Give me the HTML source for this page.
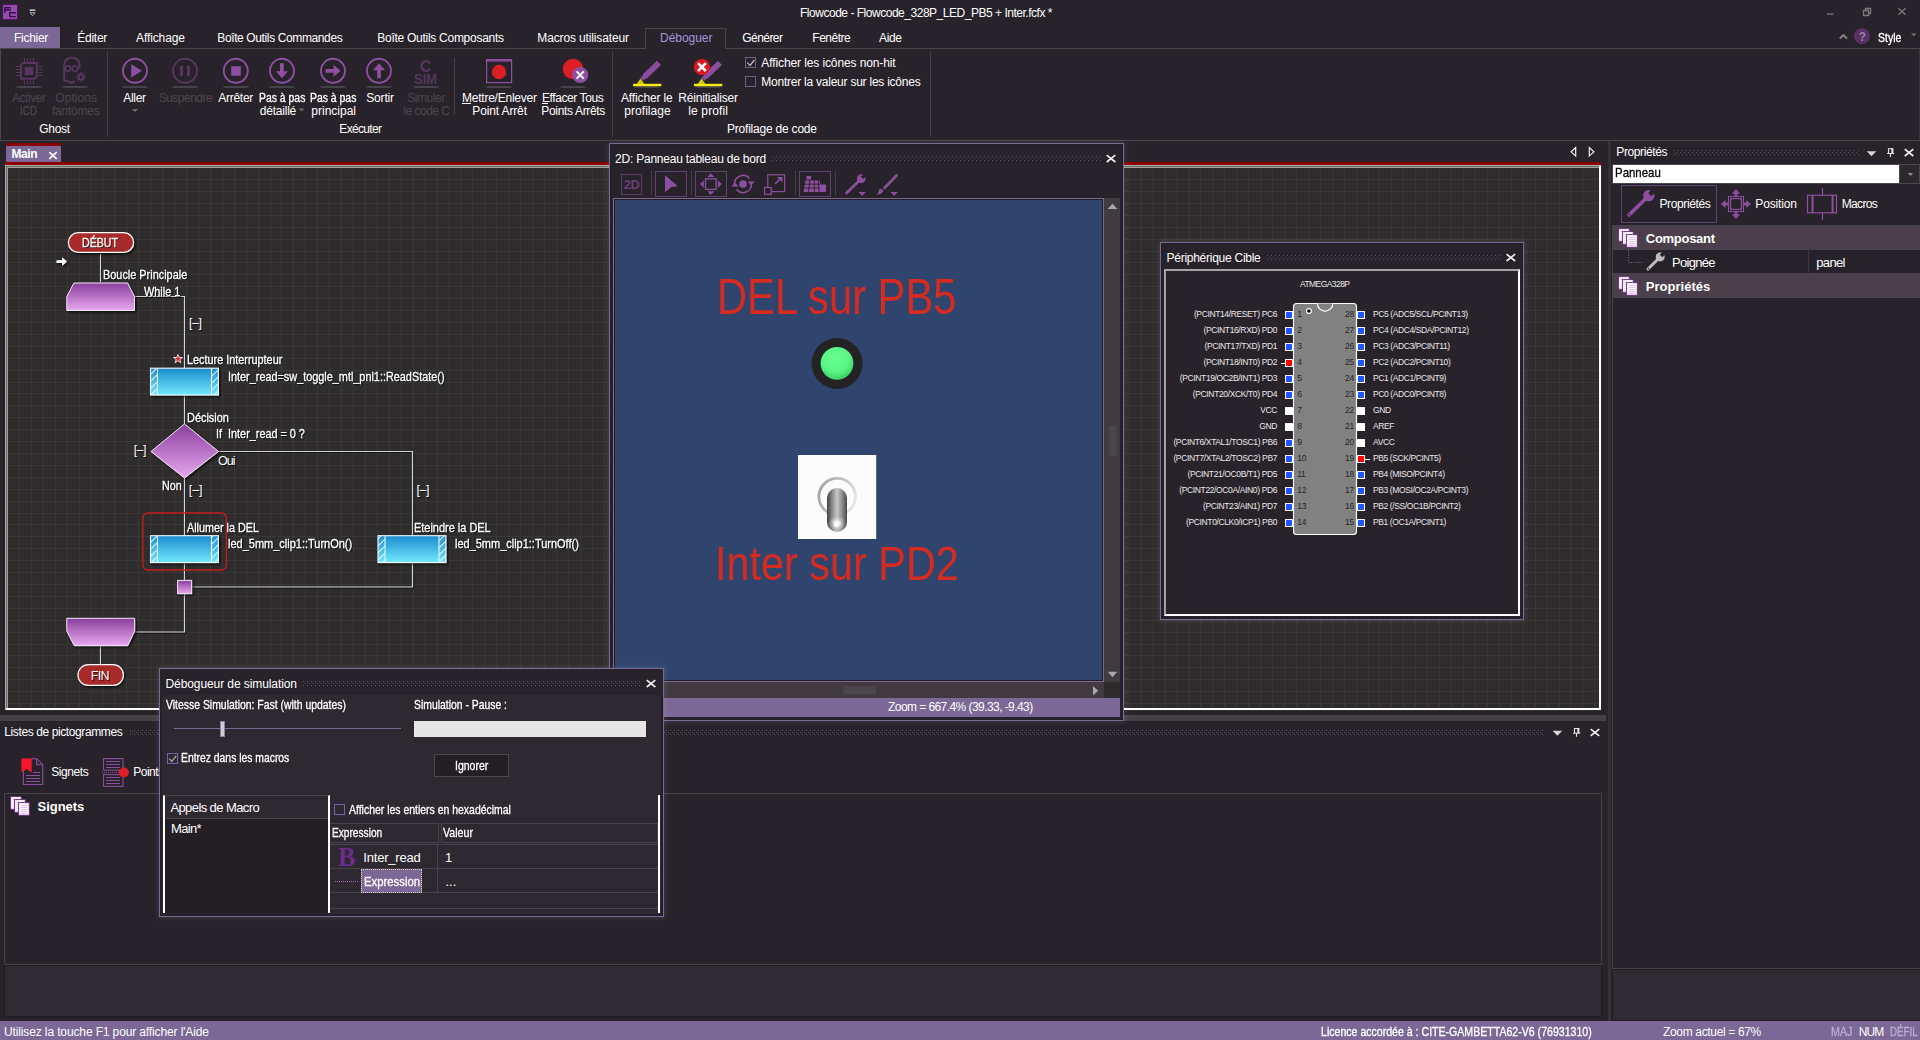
<!DOCTYPE html>
<html><head><meta charset="utf-8"><title>Flowcode</title>
<style>
*{box-sizing:border-box;margin:0;padding:0}
html,body{width:1920px;height:1040px;overflow:hidden;background:#28232a}
body{font-family:"Liberation Sans",sans-serif;font-size:12px;color:#fff;position:relative}
.a{position:absolute}
.t{position:absolute;white-space:nowrap;color:#fff}
svg{position:absolute;overflow:visible}
</style></head><body>
<svg width="0" height="0" style="left:0;top:0"><defs><pattern id="dp" width="4" height="4" patternUnits="userSpaceOnUse"><rect width="1" height="1" fill="#58545c"/><rect x="2" y="2" width="1" height="1" fill="#58545c"/></pattern></defs></svg>

<!-- p_top -->
<svg style="left:0;top:0" width="40" height="27"><rect x="2.500" y="4.500" width="15" height="15" fill="#8e4f9e" stroke="#4a1070"/><path d="M4 7h7v1.400h-5.600v0.900h5.600v1.400h-5.600v2.300h-1.400z" fill="#3c0a5a"/><path d="M9 12h7v1.400h-5.600v2.500h5.600v1.400h-7z" fill="#3c0a5a"/><rect x="29.700" y="9.400" width="5.600" height="1.600" fill="#c4c0c6"/><path d="M30 12.700h5l-2.500 3z" fill="#28232a" stroke="#c4c0c6" stroke-width="0.900"/></svg><span class="t" style="left:800.00px;top:6px;font-size:12px;line-height:14px;letter-spacing:-0.478px;">Flowcode - Flowcode_328P_LED_PB5 + Inter.fcfx *</span><svg style="left:1820px;top:0" width="100" height="27" fill="none" stroke="#7d7980" stroke-width="1.3"><path d="M7 14h6.5"/><path d="M43.5 10.5h5v5h-5zM45.5 10.5v-2h5v5h-2"/><path d="M78.300 8.300l7.300 6.500M85.600 8.300l-7.300 6.500"/></svg><svg style="left:1836px;top:27px" width="84" height="21"><path d="M3.700 11.600l3.700-3.600 3.700 3.600" fill="none" stroke="#8a868c" stroke-width="1.900"/><circle cx="26" cy="9.200" r="8" fill="#583266"/><path d="M75 6.500h5.500l-2.750 2.800z" fill="#77737a"/></svg><span class="t" style="left:1858.50px;top:29px;font-size:13px;line-height:15px;color:#9b8ca6;font-weight:bold;transform:scaleX(0.8802);transform-origin:0 0;">?</span><span class="t" style="left:1878.30px;top:31px;font-size:12px;line-height:14px;transform:scaleX(0.8768);transform-origin:0 0;-webkit-text-stroke:0.300px;">Style</span><div class="a" style="left:0px;top:27px;width:60px;height:21px;background:#7b6896"></div><span class="t" style="left:14.00px;top:31px;font-size:12px;line-height:14px;letter-spacing:-0.286px;">Fichier</span><span class="t" style="left:77.30px;top:31px;font-size:12px;line-height:14px;letter-spacing:-0.272px;">Éditer</span><span class="t" style="left:136.00px;top:31px;font-size:12px;line-height:14px;letter-spacing:-0.104px;">Affichage</span><span class="t" style="left:217.30px;top:31px;font-size:12px;line-height:14px;letter-spacing:-0.381px;">Boîte Outils Commandes</span><span class="t" style="left:377.30px;top:31px;font-size:12px;line-height:14px;letter-spacing:-0.274px;">Boîte Outils Composants</span><span class="t" style="left:537.30px;top:31px;font-size:12px;line-height:14px;letter-spacing:-0.137px;">Macros utilisateur</span><span class="t" style="left:742.30px;top:31px;font-size:12px;line-height:14px;letter-spacing:-0.555px;">Générer</span><span class="t" style="left:812.30px;top:31px;font-size:12px;line-height:14px;letter-spacing:-0.493px;">Fenêtre</span><span class="t" style="left:879.00px;top:31px;font-size:12px;line-height:14px;letter-spacing:-0.344px;">Aide</span><div class="a" style="left:0px;top:48px;width:1920px;height:93px;border-top:1px solid #484648;border-bottom:1px solid #484648;border-left:1px solid #4a464c;border-right:1px solid #3a363c"></div><div class="a" style="left:645px;top:28px;width:81px;height:21px;border:1px solid #484648;border-bottom:none;background:#28232a"></div><span class="t" style="left:660.00px;top:31px;font-size:12px;line-height:14px;color:#a493dc;letter-spacing:-0.031px;">Déboguer</span><div class="a" style="left:107px;top:51px;width:1px;height:86px;background:#433f45"></div><div class="a" style="left:454px;top:58px;width:1px;height:57px;background:#433f45"></div><div class="a" style="left:612px;top:51px;width:1px;height:86px;background:#433f45"></div><div class="a" style="left:930px;top:51px;width:1px;height:86px;background:#433f45"></div><div class="a" style="left:16px;top:86px;width:26px;height:2px;background:linear-gradient(90deg,#343036,#47434a 14%,#47434a 86%,#343036)"></div><div class="a" style="left:62px;top:86px;width:26px;height:2px;background:linear-gradient(90deg,#343036,#47434a 14%,#47434a 86%,#343036)"></div><div class="a" style="left:122px;top:86px;width:26px;height:2px;background:linear-gradient(90deg,#343036,#47434a 14%,#47434a 86%,#343036)"></div><div class="a" style="left:172px;top:86px;width:26px;height:2px;background:linear-gradient(90deg,#343036,#47434a 14%,#47434a 86%,#343036)"></div><div class="a" style="left:223px;top:86px;width:26px;height:2px;background:linear-gradient(90deg,#343036,#47434a 14%,#47434a 86%,#343036)"></div><div class="a" style="left:269px;top:86px;width:26px;height:2px;background:linear-gradient(90deg,#343036,#47434a 14%,#47434a 86%,#343036)"></div><div class="a" style="left:320px;top:86px;width:26px;height:2px;background:linear-gradient(90deg,#343036,#47434a 14%,#47434a 86%,#343036)"></div><div class="a" style="left:366px;top:86px;width:26px;height:2px;background:linear-gradient(90deg,#343036,#47434a 14%,#47434a 86%,#343036)"></div><div class="a" style="left:413px;top:86px;width:26px;height:2px;background:linear-gradient(90deg,#343036,#47434a 14%,#47434a 86%,#343036)"></div><div class="a" style="left:486px;top:86px;width:26px;height:2px;background:linear-gradient(90deg,#343036,#47434a 14%,#47434a 86%,#343036)"></div><div class="a" style="left:560px;top:86px;width:26px;height:2px;background:linear-gradient(90deg,#343036,#47434a 14%,#47434a 86%,#343036)"></div><div class="a" style="left:634px;top:86px;width:26px;height:2px;background:linear-gradient(90deg,#343036,#47434a 14%,#47434a 86%,#343036)"></div><div class="a" style="left:695px;top:86px;width:26px;height:2px;background:linear-gradient(90deg,#343036,#47434a 14%,#47434a 86%,#343036)"></div><svg style="left:0;top:0" width="1" height="1" fill="none" stroke="#573660"><path d="M23 63.100h13.900v13.500l-2.300 2.200h-13.500v-13.700z" stroke-width="2"/><rect x="24.900" y="67.100" width="8.300" height="7.900" fill="#573660" stroke="none"/><path d="M24.5 57.900v4.200M24.5 80.500v4M15.900 66.5h4.200M38.600 66.5h3.600" stroke-width="1.200"/><path d="M27.5 57.900v4.200M27.5 80.500v4M15.900 69.5h4.200M38.600 69.5h3.600" stroke-width="1.200"/><path d="M30.5 57.900v4.200M30.5 80.500v4M15.900 72.5h4.200M38.600 72.5h3.600" stroke-width="1.200"/><path d="M33.5 57.900v4.200M33.5 80.500v4M15.900 75.5h4.200M38.600 75.5h3.600" stroke-width="1.200"/></svg><svg style="left:0;top:0" width="1" height="1" fill="none" stroke="#573660" stroke-width="1.900"><path d="M64.200 81.200V65.200a7.700 7.700 0 0 1 15.400 0v3.200M64.200 81.200q2.600 -1.800 5 0.700q2.600 2.300 5.600 -1"/><circle cx="67.900" cy="68.500" r="2.700" stroke-width="1.600"/><circle cx="75" cy="68.500" r="2.700" stroke-width="1.600"/><circle cx="81" cy="77" r="2.300" stroke-width="1.700"/><path d="M81 72v2.500M81 79.500v2.500M76 77h2.500M83.500 77h2.500M77.500 73.500l1.800 1.800M82.700 78.700l1.800 1.800M84.500 73.500l-1.800 1.800M79.300 78.700l-1.800 1.800" stroke-width="1.500"/></svg><svg style="left:0;top:0" width="1" height="1"><circle cx="135" cy="70.8" r="12" fill="none" stroke="#8d4f9f" stroke-width="1.9"/><path d="M131.2 64.2v13.3L142 70.8z" fill="#8d4f9f"/></svg><svg style="left:0;top:0" width="1" height="1"><circle cx="185" cy="70.8" r="12" fill="none" stroke="#573660" stroke-width="1.9"/><path d="M180 65.8h3v10h-3zM187 65.8h3v10h-3z" fill="#573660"/></svg><svg style="left:0;top:0" width="1" height="1"><circle cx="235.8" cy="70.8" r="12" fill="none" stroke="#8d4f9f" stroke-width="1.9"/><rect x="231.2" y="66.2" width="9.6" height="9.6" fill="#8d4f9f"/></svg><svg style="left:0;top:0" width="1" height="1"><circle cx="282" cy="70.8" r="12" fill="none" stroke="#8d4f9f" stroke-width="1.9"/><path d="M280 63.3h3.8v8h4.2L282 78.3l-6.200 -7h4.200z" fill="#8d4f9f"/></svg><svg style="left:0;top:0" width="1" height="1"><circle cx="333" cy="70.8" r="12" fill="none" stroke="#8d4f9f" stroke-width="1.9"/><path d="M325.5 68.900h8v-4.200l7 6.100l-7 6.100v-4.200h-8z" fill="#8d4f9f"/></svg><svg style="left:0;top:0" width="1" height="1"><circle cx="379" cy="70.8" r="12" fill="none" stroke="#8d4f9f" stroke-width="1.9"/><path d="M377.1 78.300v-8h-4.200L379 63.3l6.100 7h-4.200v8z" fill="#8d4f9f"/></svg><span class="t" style="left:419.50px;top:58px;font-size:16px;line-height:17px;color:#573660;font-weight:bold;transform:scaleX(0.9686);transform-origin:0 0;">C</span><span class="t" style="left:414.30px;top:70px;font-size:15px;line-height:17px;color:#573660;font-weight:bold;transform:scaleX(0.8623);transform-origin:0 0;">SIM</span><svg style="left:0;top:0" width="1" height="1"><rect x="486.6" y="59.6" width="25" height="23" fill="none" stroke="#8d4f9f" stroke-width="1.2"/><rect x="486.600" y="59.600" width="25" height="1.900" fill="#8d4f9f"/><circle cx="499" cy="72" r="7.2" fill="#dc1f26"/></svg><svg style="left:0;top:0" width="1" height="1"><circle cx="573" cy="69" r="10.2" fill="#dc1f26"/><circle cx="580.200" cy="75" r="8" fill="#8d4f9f"/><path d="M576.6 71.4l7.200 7.200M583.8 71.4l-7.200 7.200" stroke="#fff" stroke-width="2"/></svg><svg style="left:0px;top:0" width="1" height="1"><path d="M633 85h28.300" stroke="#f4ee14" stroke-width="2.400"/><path d="M636.600 84l3.900 -5.400 3.900 5.400z" fill="#d2cc08"/><path d="M646.29 78.91L660.99 65.01L657.01 60.79L642.31 74.69zM643.24 80.73L646.44 77.73L643.56 74.67L640.36 77.67z" fill="#8a4c9c"/></svg><svg style="left:61px;top:0" width="1" height="1"><path d="M633 85h28.300" stroke="#f4ee14" stroke-width="2.400"/><path d="M636.600 84l3.900 -5.400 3.900 5.400z" fill="#d2cc08"/><path d="M646.29 78.91L660.99 65.01L657.01 60.79L642.31 74.69zM643.24 80.73L646.44 77.73L643.56 74.67L640.36 77.67z" fill="#8a4c9c"/><circle cx="640.900" cy="67.100" r="8.100" fill="#e0141e"/><path d="M637 63.200l7.800 7.800M644.800 63.200l-7.800 7.800" stroke="#fff" stroke-width="2.500"/></svg><span class="t" style="left:12.00px;top:91px;font-size:12px;line-height:14px;color:#4b464d;letter-spacing:-0.448px;">Activer</span><span class="t" style="left:20.00px;top:104px;font-size:12px;line-height:14px;color:#4b464d;transform:scaleX(0.8369);transform-origin:0 0;-webkit-text-stroke:0.300px;">ICD</span><span class="t" style="left:55.30px;top:91px;font-size:12px;line-height:14px;color:#4b464d;letter-spacing:0.057px;">Options</span><span class="t" style="left:52.00px;top:104px;font-size:12px;line-height:14px;color:#4b464d;letter-spacing:-0.237px;">fantômes</span><span class="t" style="left:123.30px;top:91px;font-size:12px;line-height:14px;letter-spacing:-0.329px;">Aller</span><span class="t" style="left:158.70px;top:91px;font-size:12px;line-height:14px;color:#4b464d;letter-spacing:-0.506px;">Suspendre</span><span class="t" style="left:218.30px;top:91px;font-size:12px;line-height:14px;letter-spacing:-0.281px;">Arrêter</span><span class="t" style="left:259.30px;top:91px;font-size:12px;line-height:14px;transform:scaleX(0.8693);transform-origin:0 0;-webkit-text-stroke:0.300px;">Pas à pas</span><span class="t" style="left:259.70px;top:104px;font-size:12px;line-height:14px;letter-spacing:-0.204px;">détaillé</span><span class="t" style="left:310.30px;top:91px;font-size:12px;line-height:14px;transform:scaleX(0.8693);transform-origin:0 0;-webkit-text-stroke:0.300px;">Pas à pas</span><span class="t" style="left:311.30px;top:104px;font-size:12px;line-height:14px;">principal</span><span class="t" style="left:366.30px;top:91px;font-size:12px;line-height:14px;letter-spacing:-0.194px;">Sortir</span><span class="t" style="left:407.30px;top:91px;font-size:12px;line-height:14px;color:#4b464d;letter-spacing:-0.448px;">Simuler</span><span class="t" style="left:403.30px;top:104px;font-size:12px;line-height:14px;color:#4b464d;letter-spacing:-0.500px;">le code C</span><span class="t" style="left:462.00px;top:91px;font-size:12px;line-height:14px;letter-spacing:-0.233px;">Mettre/Enlever</span><span class="t" style="left:472.30px;top:104px;font-size:12px;line-height:14px;letter-spacing:-0.133px;">Point Arrêt</span><span class="t" style="left:542.00px;top:91px;font-size:12px;line-height:14px;letter-spacing:-0.415px;">Effacer Tous</span><span class="t" style="left:541.30px;top:104px;font-size:12px;line-height:14px;letter-spacing:-0.336px;">Points Arrêts</span><span class="t" style="left:621.00px;top:91px;font-size:12px;line-height:14px;letter-spacing:-0.144px;">Afficher le</span><span class="t" style="left:624.30px;top:104px;font-size:12px;line-height:14px;letter-spacing:0.046px;">profilage</span><span class="t" style="left:678.30px;top:91px;font-size:12px;line-height:14px;letter-spacing:-0.194px;">Réinitialiser</span><span class="t" style="left:688.30px;top:104px;font-size:12px;line-height:14px;letter-spacing:0.127px;">le profil</span><span class="t" style="left:39.30px;top:122px;font-size:12px;line-height:14px;letter-spacing:-0.329px;">Ghost</span><span class="t" style="left:339.30px;top:122px;font-size:12px;line-height:14px;letter-spacing:-0.666px;">Exécuter</span><span class="t" style="left:727.00px;top:122px;font-size:12px;line-height:14px;letter-spacing:-0.213px;">Profilage de code</span><span class="t" style="left:761.30px;top:56px;font-size:12px;line-height:14px;letter-spacing:-0.107px;">Afficher les icônes non-hit</span><span class="t" style="left:761.30px;top:75px;font-size:12px;line-height:14px;letter-spacing:-0.237px;">Montrer la valeur sur les icônes</span><div class="a" style="left:462px;top:103px;width:9px;height:1px;background:#fff"></div><div class="a" style="left:542px;top:103px;width:6px;height:1px;background:#fff"></div><svg style="left:0;top:0" width="1" height="1" fill="#6e6a70"><path d="M132 109h6l-3 3z"/><path d="M298.500 108.500h6l-3 3z"/></svg><div class="a" style="left:745px;top:57px;width:11px;height:11px;border:1px solid #6f5f8c"></div><div class="a" style="left:745px;top:76px;width:11px;height:11px;border:1px solid #6f5f8c"></div><svg style="left:0;top:0" width="1" height="1"><path d="M747.300 62.600l2.700 2.800 4.400 -5.400" fill="none" stroke="#b8b4ba" stroke-width="1.3"/></svg>
<!-- p_canvas -->
<div class="a" style="left:6px;top:143px;width:55px;height:20px;background:#7b6896;border-top:3px solid #8b0000"></div><span class="t" style="left:11.40px;top:147px;font-size:12px;line-height:14px;font-weight:bold;letter-spacing:-0.348px;">Main</span><svg style="left:0;top:0" width="1" height="1"><path d="M49.300 152.200l7.400 6.600M56.700 152.200l-7.400 6.600" stroke="#fff" stroke-width="1.700"/></svg><div class="a" style="left:5px;top:162px;width:1596px;height:3px;background:#8b0000"></div><svg style="left:0;top:0" width="1" height="1" fill="none" stroke="#fff" stroke-width="1.1"><path d="M1575.700 147.500v8.600l-4.600 -4.300z"/><path d="M1589.300 147.500v8.600l4.600 -4.300z"/></svg><svg style="left:5px;top:165px" width="1597" height="546" viewBox="5 165 1597 546" shape-rendering="crispEdges"><rect x="5" y="165" width="1597" height="546" fill="#2e2c2d"/><path d="M19.5 168V708M31.5 168V708M43.5 168V708M55.5 168V708M67.5 168V708M79.5 168V708M91.5 168V708M102.5 168V708M114.5 168V708M126.5 168V708M138.5 168V708M150.5 168V708M162.5 168V708M174.5 168V708M186.5 168V708M198.5 168V708M210.5 168V708M222.5 168V708M234.5 168V708M246.5 168V708M258.5 168V708M270.5 168V708M281.5 168V708M293.5 168V708M305.5 168V708M317.5 168V708M329.5 168V708M341.5 168V708M353.5 168V708M365.5 168V708M377.5 168V708M389.5 168V708M401.5 168V708M413.5 168V708M425.5 168V708M437.5 168V708M449.5 168V708M460.5 168V708M472.5 168V708M484.5 168V708M496.5 168V708M508.5 168V708M520.5 168V708M532.5 168V708M544.5 168V708M556.5 168V708M568.5 168V708M580.5 168V708M592.5 168V708M604.5 168V708M616.5 168V708M628.5 168V708M640.5 168V708M651.5 168V708M663.5 168V708M675.5 168V708M687.5 168V708M699.5 168V708M711.5 168V708M723.5 168V708M735.5 168V708M747.5 168V708M759.5 168V708M771.5 168V708M783.5 168V708M795.5 168V708M807.5 168V708M819.5 168V708M830.5 168V708M842.5 168V708M854.5 168V708M866.5 168V708M878.5 168V708M890.5 168V708M902.5 168V708M914.5 168V708M926.5 168V708M938.5 168V708M950.5 168V708M962.5 168V708M974.5 168V708M986.5 168V708M998.5 168V708M1010.5 168V708M1021.5 168V708M1033.5 168V708M1045.5 168V708M1057.5 168V708M1069.5 168V708M1081.5 168V708M1093.5 168V708M1105.5 168V708M1117.5 168V708M1129.5 168V708M1141.5 168V708M1153.5 168V708M1165.5 168V708M1177.5 168V708M1189.5 168V708M1200.5 168V708M1212.5 168V708M1224.5 168V708M1236.5 168V708M1248.5 168V708M1260.5 168V708M1272.5 168V708M1284.5 168V708M1296.5 168V708M1308.5 168V708M1320.5 168V708M1332.5 168V708M1344.5 168V708M1356.5 168V708M1368.5 168V708M1379.5 168V708M1391.5 168V708M1403.5 168V708M1415.5 168V708M1427.5 168V708M1439.5 168V708M1451.5 168V708M1463.5 168V708M1475.5 168V708M1487.5 168V708M1499.5 168V708M1511.5 168V708M1523.5 168V708M1535.5 168V708M1547.5 168V708M1559.5 168V708M1570.5 168V708M1582.5 168V708M1594.5 168V708M8 179.5H1599M8 191.5H1599M8 203.5H1599M8 215.5H1599M8 227.5H1599M8 239.5H1599M8 251.5H1599M8 262.5H1599M8 274.5H1599M8 286.5H1599M8 298.5H1599M8 310.5H1599M8 322.5H1599M8 334.5H1599M8 346.5H1599M8 358.5H1599M8 370.5H1599M8 382.5H1599M8 393.5H1599M8 405.5H1599M8 417.5H1599M8 429.5H1599M8 441.5H1599M8 453.5H1599M8 465.5H1599M8 477.5H1599M8 489.5H1599M8 501.5H1599M8 513.5H1599M8 524.5H1599M8 536.5H1599M8 548.5H1599M8 560.5H1599M8 572.5H1599M8 584.5H1599M8 596.5H1599M8 608.5H1599M8 620.5H1599M8 632.5H1599M8 644.5H1599M8 655.5H1599M8 667.5H1599M8 679.5H1599M8 691.5H1599M8 703.5H1599" stroke="#3a3735" stroke-width="1"/><rect x="5" y="165" width="1596" height="1" fill="#a8aaa8"/><rect x="5" y="166" width="1596" height="1" fill="#6c6c6a"/><rect x="7" y="167" width="1593" height="1" fill="#a39f94"/><rect x="5" y="165" width="1" height="545" fill="#a8aaa8"/><rect x="6" y="166" width="1" height="543" fill="#6c6c6a"/><rect x="7" y="167" width="1" height="541" fill="#a39f94"/><rect x="1599" y="166" width="2.300" height="544" fill="#fff"/><rect x="6" y="708" width="1595.300" height="2.300" fill="#fff"/></svg><div class="a" style="left:0px;top:715px;width:1606px;height:6px;background:#444244"></div><div class="a" style="left:1608px;top:141px;width:3px;height:880px;background:#343136"></div><svg style="left:0;top:0" width="1" height="1"><defs><linearGradient id="gp" x1="0" y1="0" x2="0" y2="1"><stop offset="0" stop-color="#8a3f9c"/><stop offset="1" stop-color="#e8a8f0"/></linearGradient><linearGradient id="gb" x1="0" y1="0" x2="0" y2="1"><stop offset="0" stop-color="#1c8cd0"/><stop offset="1" stop-color="#72e8fd"/></linearGradient><pattern id="hz" width="7" height="7" patternUnits="userSpaceOnUse"><path d="M-1 8L8 -1M-1 1L1 -1M6 8L8 6" stroke="#f4fcff" stroke-width="1.100" stroke-opacity="0.900"/></pattern><filter id="sh" x="-20%" y="-20%" width="150%" height="150%"><feDropShadow dx="1.500" dy="1.500" stdDeviation="0.800" flood-color="#000" flood-opacity="0.700"/></filter></defs><path d="M100.500 254V282 M135 296.500H184.500V368 M184.500 395V424 M184.500 478V536 M184.500 563V580 M218.500 451.500H412.500V536 M412.500 563V587H192.500 M184.500 594V632H135 M100.500 646V664" fill="none" stroke="#000" stroke-opacity="0.550" stroke-width="1.2" transform="translate(1.2,1.2)"/><path d="M100.500 254V282 M135 296.500H184.500V368 M184.500 395V424 M184.500 478V536 M184.500 563V580 M218.500 451.500H412.500V536 M412.500 563V587H192.500 M184.500 594V632H135 M100.500 646V664" fill="none" stroke="#d4d4d4" stroke-width="1.2"/><rect x="68.400" y="232.600" width="65.200" height="19.800" rx="9.900" fill="#a82a2a" stroke="#fff" stroke-width="1.200" filter="url(#sh)"/><rect x="78" y="664.600" width="45.400" height="20.800" rx="10.400" fill="#a82a2a" stroke="#fff" stroke-width="1.200" filter="url(#sh)"/><path d="M73.900 283H127.600L134.500 296.600V310.500H66.800V296.600z" fill="url(#gp)" stroke="#f4e4f8" stroke-width="1" filter="url(#sh)"/><path d="M66.800 618.300H134.600V631L127.800 645.600H74.200L66.800 631z" fill="url(#gp)" stroke="#f4e4f8" stroke-width="1" filter="url(#sh)"/><path d="M184.500 424L218.500 451.500L184.500 478L151 451.500z" fill="url(#gp)" stroke="#f4e4f8" stroke-width="1" filter="url(#sh)"/><rect x="177.600" y="580.400" width="14" height="13.200" fill="url(#gp)" stroke="#f4e4f8" stroke-width="1" filter="url(#sh)"/><g filter="url(#sh)"><rect x="150.5" y="368.2" width="67.900" height="26.800" fill="url(#gb)"/><rect x="150.5" y="368.2" width="7" height="26.800" fill="url(#hz)"/><rect x="211.5" y="368.2" width="7.300" height="26.800" fill="url(#hz)"/><path d="M157.5 368.2v26.800M211.5 368.2v26.800" stroke="#f0fbff" stroke-width="1"/><rect x="150.5" y="368.2" width="67.900" height="26.800" fill="none" stroke="#eef8ff" stroke-width="1.100"/></g><g filter="url(#sh)"><rect x="150.5" y="535.7" width="67.900" height="26.800" fill="url(#gb)"/><rect x="150.5" y="535.7" width="7" height="26.800" fill="url(#hz)"/><rect x="211.5" y="535.7" width="7.300" height="26.800" fill="url(#hz)"/><path d="M157.5 535.7v26.800M211.5 535.7v26.800" stroke="#f0fbff" stroke-width="1"/><rect x="150.5" y="535.7" width="67.900" height="26.800" fill="none" stroke="#eef8ff" stroke-width="1.100"/></g><g filter="url(#sh)"><rect x="378" y="535.7" width="67.900" height="26.800" fill="url(#gb)"/><rect x="378" y="535.7" width="7" height="26.800" fill="url(#hz)"/><rect x="439" y="535.7" width="7.300" height="26.800" fill="url(#hz)"/><path d="M385 535.7v26.800M439 535.7v26.800" stroke="#f0fbff" stroke-width="1"/><rect x="378" y="535.7" width="67.900" height="26.800" fill="none" stroke="#eef8ff" stroke-width="1.100"/></g><rect x="142.900" y="513" width="83.500" height="57" rx="5" fill="none" stroke="#c81c1c" stroke-width="1.400"/><path d="M56.500 260.300h5.500v-3l5 4.300l-5 4.300v-3h-5.500z" fill="#fff" filter="url(#sh)"/><path d="M178 354.500l1.200 3h3.200l-2.600 2 1 3.200-2.800-1.900-2.800 1.900 1-3.200-2.600-2h3.200z" fill="#e8202a" stroke="#fff" stroke-width="0.800"/></svg><span class="t" style="left:82.40px;top:236px;font-size:12.5px;line-height:14px;transform:scaleX(0.8496);transform-origin:0 0;-webkit-text-stroke:0.300px;text-shadow:1px 1px 1px rgba(0,0,0,.8);white-space:pre;">DÉBUT</span><span class="t" style="left:90.80px;top:669px;font-size:12.5px;line-height:14px;letter-spacing:-0.670px;text-shadow:1px 1px 1px rgba(0,0,0,.8);white-space:pre;">FIN</span><span class="t" style="left:102.80px;top:268px;font-size:12.5px;line-height:14px;transform:scaleX(0.8717);transform-origin:0 0;-webkit-text-stroke:0.300px;text-shadow:1px 1px 1px rgba(0,0,0,.8);white-space:pre;">Boucle Principale</span><span class="t" style="left:143.60px;top:285px;font-size:12.5px;line-height:14px;transform:scaleX(0.8732);transform-origin:0 0;-webkit-text-stroke:0.300px;text-shadow:1px 1px 1px rgba(0,0,0,.8);white-space:pre;">While 1</span><span class="t" style="left:186.60px;top:353px;font-size:12.5px;line-height:14px;transform:scaleX(0.8680);transform-origin:0 0;-webkit-text-stroke:0.300px;text-shadow:1px 1px 1px rgba(0,0,0,.8);white-space:pre;">Lecture Interrupteur</span><span class="t" style="left:228.30px;top:370px;font-size:12.5px;line-height:14px;transform:scaleX(0.8691);transform-origin:0 0;-webkit-text-stroke:0.300px;text-shadow:1px 1px 1px rgba(0,0,0,.8);white-space:pre;">Inter_read=sw_toggle_mtl_pnl1::ReadState()</span><span class="t" style="left:187.00px;top:411px;font-size:12.5px;line-height:14px;transform:scaleX(0.8741);transform-origin:0 0;-webkit-text-stroke:0.300px;text-shadow:1px 1px 1px rgba(0,0,0,.8);white-space:pre;">Décision</span><span class="t" style="left:216.30px;top:427px;font-size:12.5px;line-height:14px;transform:scaleX(0.8673);transform-origin:0 0;-webkit-text-stroke:0.300px;text-shadow:1px 1px 1px rgba(0,0,0,.8);white-space:pre;">If  Inter_read = 0 ?</span><span class="t" style="left:218.00px;top:454px;font-size:12.5px;line-height:14px;letter-spacing:-0.927px;text-shadow:1px 1px 1px rgba(0,0,0,.8);white-space:pre;">Oui</span><span class="t" style="left:162.40px;top:479px;font-size:12.5px;line-height:14px;transform:scaleX(0.8545);transform-origin:0 0;-webkit-text-stroke:0.300px;text-shadow:1px 1px 1px rgba(0,0,0,.8);white-space:pre;">Non</span><span class="t" style="left:187.00px;top:521px;font-size:12.5px;line-height:14px;transform:scaleX(0.8624);transform-origin:0 0;-webkit-text-stroke:0.300px;text-shadow:1px 1px 1px rgba(0,0,0,.8);white-space:pre;">Allumer la DEL</span><span class="t" style="left:227.80px;top:537px;font-size:12.5px;line-height:14px;transform:scaleX(0.8792);transform-origin:0 0;-webkit-text-stroke:0.300px;text-shadow:1px 1px 1px rgba(0,0,0,.8);white-space:pre;">led_5mm_clip1::TurnOn()</span><span class="t" style="left:414.30px;top:521px;font-size:12.5px;line-height:14px;transform:scaleX(0.8759);transform-origin:0 0;-webkit-text-stroke:0.300px;text-shadow:1px 1px 1px rgba(0,0,0,.8);white-space:pre;">Eteindre la DEL</span><span class="t" style="left:455.00px;top:537px;font-size:12.5px;line-height:14px;transform:scaleX(0.8778);transform-origin:0 0;-webkit-text-stroke:0.300px;text-shadow:1px 1px 1px rgba(0,0,0,.8);white-space:pre;">led_5mm_clip1::TurnOff()</span><span class="t" style="left:189.00px;top:316px;font-size:12.5px;line-height:14px;letter-spacing:-0.453px;text-shadow:1px 1px 1px rgba(0,0,0,.8);white-space:pre;">[–]</span><span class="t" style="left:133.70px;top:443px;font-size:12.5px;line-height:14px;letter-spacing:-0.603px;text-shadow:1px 1px 1px rgba(0,0,0,.8);white-space:pre;">[–]</span><span class="t" style="left:188.80px;top:483px;font-size:12.5px;line-height:14px;letter-spacing:-0.103px;text-shadow:1px 1px 1px rgba(0,0,0,.8);white-space:pre;">[–]</span><span class="t" style="left:416.50px;top:483px;font-size:12.5px;line-height:14px;letter-spacing:-0.453px;text-shadow:1px 1px 1px rgba(0,0,0,.8);white-space:pre;">[–]</span>
<!-- p_props -->
<span class="t" style="left:1616.30px;top:145px;font-size:12px;line-height:14px;letter-spacing:-0.389px;">Propriétés</span><svg style="left:1674px;top:150px" width="185" height="5" shape-rendering="crispEdges"><rect width="185" height="5" fill="url(#dp)"/></svg><svg style="left:0;top:0" width="1" height="1"><path d="M1866.700 151.200h9.600l-4.800 5z" fill="#d6d6d6"/><path d="M1888.500 153v-4.300h4.200v4.300M1887 153.500h7.200M1890.500 154v3" fill="none" stroke="#e4e4e4" stroke-width="1.100"/><rect x="1891.300" y="148.200" width="1.900" height="5" fill="#e4e4e4"/><path d="M1905.400 149.700l7.300 5.800M1912.700 149.700l-7.300 5.800" stroke="#f0f0f0" stroke-width="1.650" stroke-linecap="square"/></svg><div class="a" style="left:1612px;top:164px;width:308px;height:20px;background:#2d272e;border:1px solid #4a474c"></div><div class="a" style="left:1613px;top:165px;width:286px;height:18px;background:#fff"></div><div class="a" style="left:1899px;top:165px;width:1px;height:18px;background:#4a474c"></div><span class="t" style="left:1614.50px;top:165px;font-size:13px;line-height:15px;color:#000;transform:scaleX(0.8797);transform-origin:0 0;-webkit-text-stroke:0.300px;">Panneau</span><svg style="left:0;top:0" width="1" height="1"><path d="M1907.700 173h5.400l-2.700 3z" fill="#8e8e8e"/></svg><div class="a" style="left:1621px;top:184.7px;width:96px;height:38px;border:1px solid #5c4372"></div><svg style="left:0;top:0" width="1" height="1"><path d="M1629 215L1645.95 198.45" stroke="#8d4f9f" stroke-width="3.7" stroke-linecap="round"/><circle cx="1648.8" cy="195.6" r="5.7" fill="#8d4f9f"/><path d="M1651.38 196.16 L1648.24 193.02 L1654.28 186.97 L1657.43 190.12 z" fill="#28232a"/><circle cx="1629.5" cy="214.5" r="0.814" fill="#28232a"/><rect x="1728.500" y="196.500" width="15" height="15" fill="none" stroke="#8d4f9f" stroke-width="1.100"/><rect x="1730.600" y="198.600" width="10.800" height="10.800" fill="none" stroke="#8d4f9f" stroke-width="1.200"/><path d="M1736 189l4.100 4.700h-2.700v2.600h-2.800v-2.600h-2.700zM1736 219l4.100-4.700h-2.700v-2.600h-2.800v2.600h-2.700zM1720.800 204l4.700-4.100v2.700h2.600v2.800h-2.600v2.700zM1751 204l-4.700-4.100v2.700h-2.600v2.800h2.600v2.700z" fill="#8d4f9f"/><rect x="1807.500" y="195.300" width="29" height="17.500" fill="none" stroke="#8d4f9f" stroke-width="1.200"/><path d="M1822.500 188v7.300M1822.500 212.800v7.200" stroke="#8d4f9f" stroke-width="1.200"/><path d="M1812.500 195.300v17.500M1832.600 195.300v17.500" stroke="#8d4f9f" stroke-width="2"/></svg><span class="t" style="left:1659.50px;top:197px;font-size:12px;line-height:14px;letter-spacing:-0.389px;">Propriétés</span><span class="t" style="left:1755.30px;top:197px;font-size:12px;line-height:14px;letter-spacing:-0.143px;">Position</span><span class="t" style="left:1841.70px;top:197px;font-size:12px;line-height:14px;letter-spacing:-0.649px;">Macros</span><div class="a" style="left:1612px;top:225px;width:308px;height:744px;border-left:1px solid #454347;border-bottom:1px solid #454347;border-top:1px solid #454347"></div><div class="a" style="left:1613px;top:226px;width:307px;height:24px;background:#4b3f4b"></div><div class="a" style="left:1613px;top:273px;width:307px;height:25px;background:#4b3f4b"></div><div class="a" style="left:1613px;top:250px;width:195px;height:23px;background:#27222a"></div><div class="a" style="left:1809px;top:250px;width:111px;height:23px;background:#27222a"></div><div class="a" style="left:1808px;top:250px;width:1px;height:23px;background:#3d393f"></div><svg style="left:1618px;top:228px" width="21" height="21"><rect x="0.6" y="0.6" width="10.700" height="12.700" fill="#fff" stroke="#6f2d86" stroke-width="1"/><path d="M2.6 3.5h6.800M2.6 5.5h6.800M2.6 7.5h6.800M2.6 9.5h6.800M2.6 11.5h6.800" stroke="#ecbef6" stroke-width="1"/><rect x="4.6" y="3.6" width="10.700" height="12.700" fill="#fff" stroke="#6f2d86" stroke-width="1"/><path d="M6.6 6.5h6.800M6.6 8.5h6.800M6.6 10.5h6.800M6.6 12.5h6.800M6.6 14.5h6.800" stroke="#ecbef6" stroke-width="1"/><rect x="8.6" y="6.6" width="10.700" height="12.700" fill="#fff" stroke="#6f2d86" stroke-width="1"/><path d="M10.6 9.5h6.800M10.6 11.5h6.800M10.6 13.5h6.800M10.6 15.5h6.800M10.6 17.5h6.800" stroke="#ecbef6" stroke-width="1"/></svg><svg style="left:1618px;top:276px" width="21" height="21"><rect x="0.6" y="0.6" width="10.700" height="12.700" fill="#fff" stroke="#6f2d86" stroke-width="1"/><path d="M2.6 3.5h6.800M2.6 5.5h6.800M2.6 7.5h6.800M2.6 9.5h6.800M2.6 11.5h6.800" stroke="#ecbef6" stroke-width="1"/><rect x="4.6" y="3.6" width="10.700" height="12.700" fill="#fff" stroke="#6f2d86" stroke-width="1"/><path d="M6.6 6.5h6.800M6.6 8.5h6.800M6.6 10.5h6.800M6.6 12.5h6.800M6.6 14.5h6.800" stroke="#ecbef6" stroke-width="1"/><rect x="8.6" y="6.6" width="10.700" height="12.700" fill="#fff" stroke="#6f2d86" stroke-width="1"/><path d="M10.6 9.5h6.800M10.6 11.5h6.800M10.6 13.5h6.800M10.6 15.5h6.800M10.6 17.5h6.800" stroke="#ecbef6" stroke-width="1"/></svg><span class="t" style="left:1645.80px;top:231px;font-size:13px;line-height:15px;font-weight:bold;letter-spacing:-0.287px;">Composant</span><span class="t" style="left:1645.80px;top:279px;font-size:13px;line-height:15px;font-weight:bold;letter-spacing:0.021px;">Propriétés</span><span class="t" style="left:1672.00px;top:255px;font-size:13px;line-height:15px;letter-spacing:-0.703px;">Poignée</span><span class="t" style="left:1816.20px;top:255px;font-size:13px;line-height:15px;letter-spacing:-0.628px;">panel</span><svg style="left:0;top:0" width="1" height="1"><path d="M1628.500 250v12.500h14.500" fill="none" stroke="#77737a" stroke-width="1" stroke-dasharray="1 1.500"/><path d="M1648 269L1657.95 259.15" stroke="#bcbcbc" stroke-width="2.9" stroke-linecap="round"/><circle cx="1660.2" cy="256.9" r="4.5" fill="#bcbcbc"/><path d="M1662.24 257.35 L1659.75 254.86 L1664.53 250.09 L1667.01 252.57 z" fill="#27222a"/><circle cx="1648.5" cy="268.5" r="0.638" fill="#27222a"/></svg><div class="a" style="left:1612px;top:969px;width:308px;height:52px;background:#302b32;border:1px solid #1e1a20;border-right:none"></div>
<!-- p_bottom -->
<span class="t" style="left:4.30px;top:725px;font-size:12px;line-height:14px;letter-spacing:-0.397px;">Listes de pictogrammes</span><svg style="left:130px;top:730px" width="1413" height="5" shape-rendering="crispEdges"><rect width="1413" height="5" fill="url(#dp)"/></svg><svg style="left:0;top:0" width="1" height="1"><path d="M1552.600 730.800h9.600l-4.800 5z" fill="#d6d6d6"/><path d="M1574.500 732.800v-4.300h4.200v4.300M1573 733.300h7.200M1576.500 733.800v3" fill="none" stroke="#e4e4e4" stroke-width="1.100"/><rect x="1577.300" y="728" width="1.900" height="5" fill="#e4e4e4"/><path d="M1591.300 729.600l7.300 5.800M1598.600 729.600l-7.300 5.800" stroke="#f0f0f0" stroke-width="1.650" stroke-linecap="square"/></svg><svg style="left:0;top:0" width="1" height="1" fill="none" stroke="#8d4f9f" stroke-width="1.100"><path d="M31 758.700h5.700l6 6v19.800h-19.300V771"/><path d="M36.700 758.700v6h6"/><path d="M33 772.500h7M26 775.500h14M26 778.500h14M26 781.500h14" stroke-width="1"/><path d="M21.400 758.600h10.300v14l-5.150-3.600-5.150 3.600z" fill="#f5182c" stroke="none"/><rect x="103.500" y="758.600" width="19.500" height="11.600"/><rect x="103.500" y="774.600" width="19.500" height="11.800"/><path d="M106 761.500h14M106 764.500h14M106 767.500h14M106 777.500h14M106 780.500h14M106 783.500h14" stroke-width="1"/><path d="M102 772.500h17" stroke-dasharray="1 1"/><circle cx="123.900" cy="772.500" r="5.100" fill="#dc1f26" stroke="none"/></svg><span class="t" style="left:51.30px;top:765px;font-size:12px;line-height:14px;letter-spacing:-0.439px;">Signets</span><span class="t" style="left:133.30px;top:765px;font-size:12px;line-height:14px;letter-spacing:-0.532px;">Points</span><div class="a" style="left:4px;top:793px;width:1598px;height:172px;border:1px solid #454347"></div><div class="a" style="left:4px;top:965px;width:1598px;height:52px;border:1px solid #1e1a20;background:#302b32"></div><svg style="left:10px;top:796px" width="21" height="21"><rect x="0.6" y="0.6" width="10.700" height="12.700" fill="#fff" stroke="#6f2d86" stroke-width="1"/><path d="M2.6 3.5h6.800M2.6 5.5h6.800M2.6 7.5h6.800M2.6 9.5h6.800M2.6 11.5h6.800" stroke="#ecbef6" stroke-width="1"/><rect x="4.6" y="3.6" width="10.700" height="12.700" fill="#fff" stroke="#6f2d86" stroke-width="1"/><path d="M6.6 6.5h6.800M6.6 8.5h6.800M6.6 10.5h6.800M6.6 12.5h6.800M6.6 14.5h6.800" stroke="#ecbef6" stroke-width="1"/><rect x="8.6" y="6.6" width="10.700" height="12.700" fill="#fff" stroke="#6f2d86" stroke-width="1"/><path d="M10.6 9.5h6.800M10.6 11.5h6.800M10.6 13.5h6.800M10.6 15.5h6.800M10.6 17.5h6.800" stroke="#ecbef6" stroke-width="1"/></svg><span class="t" style="left:37.50px;top:799px;font-size:13px;line-height:15px;font-weight:bold;letter-spacing:-0.028px;">Signets</span>
<!-- p_2d -->
<div class="a" style="left:609px;top:143px;width:515px;height:578px;background:#28232a;border:1px solid #7b6896;box-shadow:0 0 5px 1px rgba(255,255,255,.11),inset 0 0 0 2px #242027"></div><span class="t" style="left:615.00px;top:152px;font-size:12px;line-height:14px;letter-spacing:-0.215px;">2D: Panneau tableau de bord</span><svg style="left:772px;top:156px" width="329" height="5" shape-rendering="crispEdges"><rect width="329" height="5" fill="url(#dp)"/></svg><svg style="left:0;top:0" width="1" height="1"><path d="M1107.400 155.700l7.300 5.800M1114.700 155.700l-7.300 5.800" stroke="#f0f0f0" stroke-width="1.650" stroke-linecap="square"/></svg><div class="a" style="left:621px;top:174px;width:21px;height:21px;border:1px solid #5e3868"></div><span class="t" style="left:623.80px;top:177px;font-size:13px;line-height:15px;color:#6a3f78;font-weight:bold;letter-spacing:-0.425px;">2D</span><div class="a" style="left:651px;top:171px;width:1px;height:25px;background:#433f45"></div><div class="a" style="left:691px;top:171px;width:1px;height:25px;background:#433f45"></div><div class="a" style="left:795px;top:171px;width:1px;height:25px;background:#433f45"></div><div class="a" style="left:835px;top:171px;width:1px;height:25px;background:#433f45"></div><div class="a" style="left:655px;top:171px;width:32px;height:26px;border:1px solid #5c4372"></div><div class="a" style="left:695px;top:171px;width:32px;height:26px;border:1px solid #5c4372"></div><div class="a" style="left:799px;top:171px;width:32px;height:26px;border:1px solid #5c4372"></div><svg style="left:0;top:0" width="1" height="1"><path d="M665 175.200L677.700 186L671 187.300L665 192.300z" fill="#8d4f9f"/><rect x="705.500" y="178.800" width="10.600" height="10.600" fill="none" stroke="#8d4f9f" stroke-width="1.300"/><path d="M710.800 173.300l3.600 3.800h-7.200zM710.800 195l3.600 -3.800h-7.200zM700 184.100l3.800 -3.600v7.200zM721.700 184.100l-3.800 -3.600v7.200z" fill="#8d4f9f"/><circle cx="743" cy="184" r="3.800" fill="#8d4f9f"/><path d="M734.500 184a8.500 8.500 0 0 1 15 -5.500" fill="none" stroke="#8d4f9f" stroke-width="1.500"/><path d="M751.500 184a8.500 8.500 0 0 1 -15 5.500" fill="none" stroke="#8d4f9f" stroke-width="1.500"/><path d="M747.500 181.500h7l-3.500 4zM731.500 186.500h7l-3.500 -4z" fill="#8d4f9f"/><rect x="767.800" y="174.800" width="16.800" height="16.800" fill="none" stroke="#8d4f9f" stroke-width="1.200"/><rect x="764.500" y="187.500" width="6.800" height="6.800" fill="#28232a" stroke="#8d4f9f" stroke-width="1.200"/><path d="M775 184l6 -6" stroke="#8d4f9f" stroke-width="1.600"/><path d="M777 177h5.500v5.500z" fill="#8d4f9f"/><path d="M806.500 176h4.500v3.500h-4.500zM805.500 180.500h14l1 4h5.500v7.500h-22.500z" fill="#8d4f9f"/><path d="M804.500 184.200h15.500M804 188h16M809.800 180.500l-1.300 11.500M814.300 180.500v11.500M818.300 180.500l0.800 11.500" stroke="#28232a" stroke-width="0.900"/><path d="M846.5 193L859.15 180.75" stroke="#8d4f9f" stroke-width="2.8" stroke-linecap="round"/><circle cx="861.3" cy="178.6" r="4.3" fill="#8d4f9f"/><path d="M863.25 179.03 L860.87 176.65 L865.44 172.09 L867.81 174.46 z" fill="#28232a"/><path d="M858.500 192h7.400l-3.700 3.800z" fill="#8d4f9f"/><path d="M884.500 188L896.500 175.500" stroke="#8d4f9f" stroke-width="2.600" stroke-linecap="round"/><path d="M877 194.500q4 0.500 6.500 -3.500q-1.500 -3 -4 -2q-1 3 -2.500 5.500z" fill="#8d4f9f"/><path d="M890.500 192h7.400l-3.700 3.800z" fill="#8d4f9f"/></svg><div class="a" style="left:613px;top:198px;width:491px;height:484px;background:#2f456e;border:1px solid #7b6896;box-shadow:inset 0 0 0 1px #221e24"></div><div class="a" style="left:1104px;top:198px;width:16px;height:484px;background:#413a41"></div><div class="a" style="left:1108.5px;top:426px;width:8px;height:30px;background:#4b464d"></div><div class="a" style="left:614px;top:682px;width:490px;height:16px;background:#413a41"></div><div class="a" style="left:843px;top:686px;width:33px;height:8px;background:#4b464d"></div><div class="a" style="left:1104px;top:682px;width:16px;height:16px;background:#2d2b2c"></div><svg style="left:0;top:0" width="1" height="1" fill="#a9a9a9"><path d="M1107.700 209h9.600l-4.800 -5.300z"/><path d="M1107.800 671.800h9.400l-4.700 5.400z"/><path d="M1093 685.900v9.500l5.100 -4.750z"/></svg><div class="a" style="left:614px;top:698px;width:506px;height:19px;background:#7b6896"></div><span class="t" style="left:888.00px;top:700px;font-size:12px;line-height:14px;letter-spacing:-0.564px;">Zoom = 667.4% (39.33, -9.43)</span><span class="t" style="left:716.80px;top:269px;font-size:50px;line-height:56px;color:#d62b20;transform:scaleX(0.8336);transform-origin:0 0;">DEL sur PB5</span><span class="t" style="left:715.00px;top:536px;font-size:49px;line-height:54px;color:#d62b20;transform:scaleX(0.8449);transform-origin:0 0;">Inter sur PD2</span><svg style="left:0;top:0" width="1" height="1"><defs><radialGradient id="lg" cx="0.450" cy="0.350" r="0.700"><stop offset="0" stop-color="#6aff90"/><stop offset="0.600" stop-color="#5af585"/><stop offset="1" stop-color="#35c862"/></radialGradient><linearGradient id="lv" x1="0" y1="0" x2="1" y2="0"><stop offset="0" stop-color="#404040"/><stop offset="0.220" stop-color="#808080"/><stop offset="0.500" stop-color="#c8c8c8"/><stop offset="0.780" stop-color="#868686"/><stop offset="1" stop-color="#484848"/></linearGradient><linearGradient id="rg" x1="0" y1="0.300" x2="1" y2="0.700"><stop offset="0" stop-color="#a4a4a4"/><stop offset="1" stop-color="#e6e6e6"/></linearGradient><radialGradient id="bl" cx="0.500" cy="0.550" r="0.550"><stop offset="0" stop-color="#fff"/><stop offset="0.250" stop-color="#f4f4f4"/><stop offset="1" stop-color="#909090" stop-opacity="0"/></radialGradient></defs><circle cx="837.100" cy="363.500" r="25.500" fill="#232323"/><circle cx="837" cy="363.300" r="16.400" fill="url(#lg)"/><rect x="798" y="455" width="78.200" height="84" fill="#fcfcfc"/><circle cx="837.200" cy="496.600" r="18.300" fill="none" stroke="url(#rg)" stroke-width="2.800"/><rect x="827" y="488" width="20" height="44" rx="10" fill="url(#lv)"/><circle cx="837" cy="522.500" r="8.500" fill="url(#bl)"/><circle cx="836.300" cy="525" r="2" fill="#fff"/></svg>
<!-- p_chip -->
<div class="a" style="left:1160px;top:242px;width:364px;height:378px;background:#28232a;border:1px solid #7b6896;box-shadow:0 0 5px 1px rgba(255,255,255,.11),inset 0 0 0 2px #242027"></div><span class="t" style="left:1166.50px;top:251px;font-size:12px;line-height:14px;letter-spacing:-0.261px;">Périphérique Cible</span><svg style="left:1267px;top:255px" width="233" height="5" shape-rendering="crispEdges"><rect width="233" height="5" fill="url(#dp)"/></svg><svg style="left:0;top:0" width="1" height="1"><path d="M1507.200 254.700l7.300 5.800M1514.500 254.700l-7.300 5.800" stroke="#f0f0f0" stroke-width="1.650" stroke-linecap="square"/></svg><div class="a" style="left:1164px;top:269px;width:356px;height:347px;border:2px solid #fff;border-top-color:#a4a4a4;border-left-color:#a4a4a4;background:#28232a"></div><span class="t" style="left:1300.00px;top:279px;font-size:8.5px;line-height:10px;color:#e8e8e8;letter-spacing:-0.569px;">ATMEGA328P</span><svg style="left:0;top:0" width="1" height="1" shape-rendering="auto"><rect x="1293.500" y="303.500" width="63" height="231" rx="3" fill="#818181" stroke="#fff" stroke-width="1.100"/><path d="M1317.400 303.500a7.700 7.700 0 0 0 15.400 0" fill="#818181" stroke="#fff" stroke-width="1.200"/><circle cx="1308.900" cy="311" r="2.400" fill="#000" stroke="#fff" stroke-width="1.200"/><rect x="1285" y="311" width="8" height="8" fill="#fff"/><rect x="1286" y="312" width="6" height="6" fill="#2454ff"/><rect x="1357" y="311" width="8" height="8" fill="#fff"/><rect x="1358" y="312" width="6" height="6" fill="#2454ff"/><rect x="1285" y="327" width="8" height="8" fill="#fff"/><rect x="1286" y="328" width="6" height="6" fill="#2454ff"/><rect x="1357" y="327" width="8" height="8" fill="#fff"/><rect x="1358" y="328" width="6" height="6" fill="#2454ff"/><rect x="1285" y="343" width="8" height="8" fill="#fff"/><rect x="1286" y="344" width="6" height="6" fill="#2454ff"/><rect x="1357" y="343" width="8" height="8" fill="#fff"/><rect x="1358" y="344" width="6" height="6" fill="#2454ff"/><rect x="1285" y="359" width="8" height="8" fill="#fff"/><rect x="1286" y="360" width="6" height="6" fill="#ff0000"/><rect x="1357" y="359" width="8" height="8" fill="#fff"/><rect x="1358" y="360" width="6" height="6" fill="#2454ff"/><rect x="1281" y="363" width="4" height="1" fill="#fff"/><rect x="1285" y="375" width="8" height="8" fill="#fff"/><rect x="1286" y="376" width="6" height="6" fill="#2454ff"/><rect x="1357" y="375" width="8" height="8" fill="#fff"/><rect x="1358" y="376" width="6" height="6" fill="#2454ff"/><rect x="1285" y="391" width="8" height="8" fill="#fff"/><rect x="1286" y="392" width="6" height="6" fill="#2454ff"/><rect x="1357" y="391" width="8" height="8" fill="#fff"/><rect x="1358" y="392" width="6" height="6" fill="#2454ff"/><rect x="1285" y="407" width="8" height="8" fill="#fff"/><rect x="1286" y="408" width="6" height="6" fill="#ffffff"/><rect x="1357" y="407" width="8" height="8" fill="#fff"/><rect x="1358" y="408" width="6" height="6" fill="#ffffff"/><rect x="1285" y="423" width="8" height="8" fill="#fff"/><rect x="1286" y="424" width="6" height="6" fill="#ffffff"/><rect x="1357" y="423" width="8" height="8" fill="#fff"/><rect x="1358" y="424" width="6" height="6" fill="#ffffff"/><rect x="1285" y="439" width="8" height="8" fill="#fff"/><rect x="1286" y="440" width="6" height="6" fill="#2454ff"/><rect x="1357" y="439" width="8" height="8" fill="#fff"/><rect x="1358" y="440" width="6" height="6" fill="#ffffff"/><rect x="1285" y="455" width="8" height="8" fill="#fff"/><rect x="1286" y="456" width="6" height="6" fill="#2454ff"/><rect x="1357" y="455" width="8" height="8" fill="#fff"/><rect x="1358" y="456" width="6" height="6" fill="#ff0000"/><rect x="1365" y="459" width="5" height="1" fill="#fff"/><rect x="1285" y="471" width="8" height="8" fill="#fff"/><rect x="1286" y="472" width="6" height="6" fill="#2454ff"/><rect x="1357" y="471" width="8" height="8" fill="#fff"/><rect x="1358" y="472" width="6" height="6" fill="#2454ff"/><rect x="1285" y="487" width="8" height="8" fill="#fff"/><rect x="1286" y="488" width="6" height="6" fill="#2454ff"/><rect x="1357" y="487" width="8" height="8" fill="#fff"/><rect x="1358" y="488" width="6" height="6" fill="#2454ff"/><rect x="1285" y="503" width="8" height="8" fill="#fff"/><rect x="1286" y="504" width="6" height="6" fill="#2454ff"/><rect x="1357" y="503" width="8" height="8" fill="#fff"/><rect x="1358" y="504" width="6" height="6" fill="#2454ff"/><rect x="1285" y="519" width="8" height="8" fill="#fff"/><rect x="1286" y="520" width="6" height="6" fill="#2454ff"/><rect x="1357" y="519" width="8" height="8" fill="#fff"/><rect x="1358" y="520" width="6" height="6" fill="#2454ff"/></svg><span class="t" style="right:642.93px;top:309px;font-size:8.500px;line-height:10px;color:#e8e8e8;letter-spacing:-0.370px">(PCINT14/RESET) PC6</span><span class="t" style="left:1373px;top:309px;font-size:8.500px;line-height:10px;color:#e8e8e8;letter-spacing:-0.400px">PC5 (ADC5/SCL/PCINT13)</span><span class="t" style="left:1297.300px;top:309px;font-size:8.500px;line-height:10px;color:#2a2424;letter-spacing:-0.300px">1</span><span class="t" style="right:566.1px;top:309px;font-size:8.500px;line-height:10px;color:#2a2424;letter-spacing:-0.300px">28</span><span class="t" style="right:642.93px;top:325px;font-size:8.500px;line-height:10px;color:#e8e8e8;letter-spacing:-0.370px">(PCINT16/RXD) PD0</span><span class="t" style="left:1373px;top:325px;font-size:8.500px;line-height:10px;color:#e8e8e8;letter-spacing:-0.400px">PC4 (ADC4/SDA/PCINT12)</span><span class="t" style="left:1297.300px;top:325px;font-size:8.500px;line-height:10px;color:#2a2424;letter-spacing:-0.300px">2</span><span class="t" style="right:566.1px;top:325px;font-size:8.500px;line-height:10px;color:#2a2424;letter-spacing:-0.300px">27</span><span class="t" style="right:642.93px;top:341px;font-size:8.500px;line-height:10px;color:#e8e8e8;letter-spacing:-0.370px">(PCINT17/TXD) PD1</span><span class="t" style="left:1373px;top:341px;font-size:8.500px;line-height:10px;color:#e8e8e8;letter-spacing:-0.400px">PC3 (ADC3/PCINT11)</span><span class="t" style="left:1297.300px;top:341px;font-size:8.500px;line-height:10px;color:#2a2424;letter-spacing:-0.300px">3</span><span class="t" style="right:566.1px;top:341px;font-size:8.500px;line-height:10px;color:#2a2424;letter-spacing:-0.300px">26</span><span class="t" style="right:642.93px;top:357px;font-size:8.500px;line-height:10px;color:#e8e8e8;letter-spacing:-0.370px">(PCINT18/INT0) PD2</span><span class="t" style="left:1373px;top:357px;font-size:8.500px;line-height:10px;color:#e8e8e8;letter-spacing:-0.400px">PC2 (ADC2/PCINT10)</span><span class="t" style="left:1297.300px;top:357px;font-size:8.500px;line-height:10px;color:#2a2424;letter-spacing:-0.300px">4</span><span class="t" style="right:566.1px;top:357px;font-size:8.500px;line-height:10px;color:#2a2424;letter-spacing:-0.300px">25</span><span class="t" style="right:642.93px;top:373px;font-size:8.500px;line-height:10px;color:#e8e8e8;letter-spacing:-0.370px">(PCINT19/OC2B/INT1) PD3</span><span class="t" style="left:1373px;top:373px;font-size:8.500px;line-height:10px;color:#e8e8e8;letter-spacing:-0.400px">PC1 (ADC1/PCINT9)</span><span class="t" style="left:1297.300px;top:373px;font-size:8.500px;line-height:10px;color:#2a2424;letter-spacing:-0.300px">5</span><span class="t" style="right:566.1px;top:373px;font-size:8.500px;line-height:10px;color:#2a2424;letter-spacing:-0.300px">24</span><span class="t" style="right:642.93px;top:389px;font-size:8.500px;line-height:10px;color:#e8e8e8;letter-spacing:-0.370px">(PCINT20/XCK/T0) PD4</span><span class="t" style="left:1373px;top:389px;font-size:8.500px;line-height:10px;color:#e8e8e8;letter-spacing:-0.400px">PC0 (ADC0/PCINT8)</span><span class="t" style="left:1297.300px;top:389px;font-size:8.500px;line-height:10px;color:#2a2424;letter-spacing:-0.300px">6</span><span class="t" style="right:566.1px;top:389px;font-size:8.500px;line-height:10px;color:#2a2424;letter-spacing:-0.300px">23</span><span class="t" style="right:642.93px;top:405px;font-size:8.500px;line-height:10px;color:#e8e8e8;letter-spacing:-0.370px">VCC</span><span class="t" style="left:1373px;top:405px;font-size:8.500px;line-height:10px;color:#e8e8e8;letter-spacing:-0.400px">GND</span><span class="t" style="left:1297.300px;top:405px;font-size:8.500px;line-height:10px;color:#2a2424;letter-spacing:-0.300px">7</span><span class="t" style="right:566.1px;top:405px;font-size:8.500px;line-height:10px;color:#2a2424;letter-spacing:-0.300px">22</span><span class="t" style="right:642.93px;top:421px;font-size:8.500px;line-height:10px;color:#e8e8e8;letter-spacing:-0.370px">GND</span><span class="t" style="left:1373px;top:421px;font-size:8.500px;line-height:10px;color:#e8e8e8;letter-spacing:-0.400px">AREF</span><span class="t" style="left:1297.300px;top:421px;font-size:8.500px;line-height:10px;color:#2a2424;letter-spacing:-0.300px">8</span><span class="t" style="right:566.1px;top:421px;font-size:8.500px;line-height:10px;color:#2a2424;letter-spacing:-0.300px">21</span><span class="t" style="right:642.93px;top:437px;font-size:8.500px;line-height:10px;color:#e8e8e8;letter-spacing:-0.370px">(PCINT6/XTAL1/TOSC1) PB6</span><span class="t" style="left:1373px;top:437px;font-size:8.500px;line-height:10px;color:#e8e8e8;letter-spacing:-0.400px">AVCC</span><span class="t" style="left:1297.300px;top:437px;font-size:8.500px;line-height:10px;color:#2a2424;letter-spacing:-0.300px">9</span><span class="t" style="right:566.1px;top:437px;font-size:8.500px;line-height:10px;color:#2a2424;letter-spacing:-0.300px">20</span><span class="t" style="right:642.93px;top:453px;font-size:8.500px;line-height:10px;color:#e8e8e8;letter-spacing:-0.370px">(PCINT7/XTAL2/TOSC2) PB7</span><span class="t" style="left:1373px;top:453px;font-size:8.500px;line-height:10px;color:#e8e8e8;letter-spacing:-0.400px">PB5 (SCK/PCINT5)</span><span class="t" style="left:1297.300px;top:453px;font-size:8.500px;line-height:10px;color:#2a2424;letter-spacing:-0.300px">10</span><span class="t" style="right:566.1px;top:453px;font-size:8.500px;line-height:10px;color:#2a2424;letter-spacing:-0.300px">19</span><span class="t" style="right:642.93px;top:469px;font-size:8.500px;line-height:10px;color:#e8e8e8;letter-spacing:-0.370px">(PCINT21/OC0B/T1) PD5</span><span class="t" style="left:1373px;top:469px;font-size:8.500px;line-height:10px;color:#e8e8e8;letter-spacing:-0.400px">PB4 (MISO/PCINT4)</span><span class="t" style="left:1297.300px;top:469px;font-size:8.500px;line-height:10px;color:#2a2424;letter-spacing:-0.300px">11</span><span class="t" style="right:566.1px;top:469px;font-size:8.500px;line-height:10px;color:#2a2424;letter-spacing:-0.300px">18</span><span class="t" style="right:642.93px;top:485px;font-size:8.500px;line-height:10px;color:#e8e8e8;letter-spacing:-0.370px">(PCINT22/OC0A/AIN0) PD6</span><span class="t" style="left:1373px;top:485px;font-size:8.500px;line-height:10px;color:#e8e8e8;letter-spacing:-0.400px">PB3 (MOSI/OC2A/PCINT3)</span><span class="t" style="left:1297.300px;top:485px;font-size:8.500px;line-height:10px;color:#2a2424;letter-spacing:-0.300px">12</span><span class="t" style="right:566.1px;top:485px;font-size:8.500px;line-height:10px;color:#2a2424;letter-spacing:-0.300px">17</span><span class="t" style="right:642.93px;top:501px;font-size:8.500px;line-height:10px;color:#e8e8e8;letter-spacing:-0.370px">(PCINT23/AIN1) PD7</span><span class="t" style="left:1373px;top:501px;font-size:8.500px;line-height:10px;color:#e8e8e8;letter-spacing:-0.400px">PB2 (/SS/OC1B/PCINT2)</span><span class="t" style="left:1297.300px;top:501px;font-size:8.500px;line-height:10px;color:#2a2424;letter-spacing:-0.300px">13</span><span class="t" style="right:566.1px;top:501px;font-size:8.500px;line-height:10px;color:#2a2424;letter-spacing:-0.300px">16</span><span class="t" style="right:642.93px;top:517px;font-size:8.500px;line-height:10px;color:#e8e8e8;letter-spacing:-0.370px">(PCINT0/CLK0/ICP1) PB0</span><span class="t" style="left:1373px;top:517px;font-size:8.500px;line-height:10px;color:#e8e8e8;letter-spacing:-0.400px">PB1 (OC1A/PCINT1)</span><span class="t" style="left:1297.300px;top:517px;font-size:8.500px;line-height:10px;color:#2a2424;letter-spacing:-0.300px">14</span><span class="t" style="right:566.1px;top:517px;font-size:8.500px;line-height:10px;color:#2a2424;letter-spacing:-0.300px">15</span>
<!-- p_debug -->
<div class="a" style="left:159px;top:668px;width:505px;height:249px;background:#2e2831;border:1px solid #7b6896;box-shadow:0 0 5px 1px rgba(255,255,255,.11),inset 0 0 0 2px #242027"></div><div class="a" style="left:160px;top:669px;width:503px;height:26px;background:#28232a"></div><span class="t" style="left:165.50px;top:677px;font-size:12px;line-height:14px;letter-spacing:-0.087px;">Débogueur de simulation</span><svg style="left:303px;top:681px" width="337" height="5" shape-rendering="crispEdges"><rect width="337" height="5" fill="url(#dp)"/></svg><svg style="left:0;top:0" width="1" height="1"><path d="M647.400 680.700l7.300 5.800M654.700 680.700l-7.300 5.800" stroke="#f0f0f0" stroke-width="1.650" stroke-linecap="square"/></svg><span class="t" style="left:166.20px;top:698px;font-size:12.5px;line-height:14px;transform:scaleX(0.8339);transform-origin:0 0;-webkit-text-stroke:0.300px;">Vitesse Simulation: Fast (with updates)</span><span class="t" style="left:414.00px;top:698px;font-size:12.5px;line-height:14px;transform:scaleX(0.8314);transform-origin:0 0;-webkit-text-stroke:0.300px;">Simulation - Pause :</span><div class="a" style="left:174px;top:728px;width:227px;height:1px;background:#7b6896"></div><div class="a" style="left:220px;top:721px;width:5px;height:16px;background:#cfcbd4;border:1px solid #8f80a8"></div><div class="a" style="left:414px;top:721px;width:232px;height:16px;background:#e6e6e6"></div><div class="a" style="left:167px;top:753px;width:11px;height:11px;border:1px solid #7663a0"></div><svg style="left:0;top:0" width="1" height="1"><path d="M169.200 758.600l2.600 2.800 4.400 -5.600" fill="none" stroke="#a8a4aa" stroke-width="1.300"/></svg><span class="t" style="left:181.20px;top:751px;font-size:12.5px;line-height:14px;transform:scaleX(0.8292);transform-origin:0 0;-webkit-text-stroke:0.300px;">Entrez dans les macros</span><div class="a" style="left:434px;top:754px;width:75px;height:23px;background:#221e24;border:1px solid #4a464c"></div><span class="t" style="left:455.00px;top:759px;font-size:12.5px;line-height:14px;transform:scaleX(0.8407);transform-origin:0 0;-webkit-text-stroke:0.300px;">Ignorer</span><div class="a" style="left:163px;top:795px;width:167px;height:118px;background:#221e24;border-left:2px solid #fff;border-right:2px solid #fff;border-top:1px solid #47434a"></div><div class="a" style="left:165px;top:796px;width:163px;height:23px;background:#2e2831;border-bottom:1px solid #47434a"></div><span class="t" style="left:170.40px;top:800px;font-size:13px;line-height:15px;letter-spacing:-0.590px;">Appels de Macro</span><span class="t" style="left:171.00px;top:821px;font-size:13px;line-height:15px;letter-spacing:-0.663px;">Main*</span><div class="a" style="left:334px;top:804px;width:11px;height:11px;border:1px solid #7663a0"></div><span class="t" style="left:348.50px;top:803px;font-size:12.5px;line-height:14px;transform:scaleX(0.8362);transform-origin:0 0;-webkit-text-stroke:0.300px;">Afficher les entiers en hexadécimal</span><div class="a" style="left:658px;top:795px;width:2px;height:118px;background:#fff"></div><div class="a" style="left:330px;top:823px;width:109px;height:20px;border:1px solid #47434a;border-left:none"></div><div class="a" style="left:441px;top:823px;width:217px;height:20px;border:1px solid #47434a"></div><span class="t" style="left:332.30px;top:826px;font-size:12.5px;line-height:14px;transform:scaleX(0.8117);transform-origin:0 0;-webkit-text-stroke:0.300px;">Expression</span><span class="t" style="left:443.00px;top:826px;font-size:12.5px;line-height:14px;transform:scaleX(0.8518);transform-origin:0 0;-webkit-text-stroke:0.300px;">Valeur</span><div class="a" style="left:330px;top:844px;width:328px;height:1px;background:#47434a"></div><div class="a" style="left:330px;top:868px;width:328px;height:1px;background:#47434a"></div><div class="a" style="left:330px;top:892px;width:328px;height:1px;background:#47434a"></div><div class="a" style="left:330px;top:908px;width:328px;height:1px;background:#47434a"></div><div class="a" style="left:437px;top:845px;width:1px;height:47px;background:#47434a"></div><span class="t" style="left:338.20px;top:841px;font-size:28px;line-height:31px;color:#6c2c8c;font-weight:bold;font-family:'Liberation Serif',serif;transform:scaleX(0.9418);transform-origin:0 0;">B</span><span class="t" style="left:363.30px;top:850px;font-size:13px;line-height:15px;letter-spacing:-0.207px;">Inter_read</span><span class="t" style="left:445.00px;top:850px;font-size:13px;line-height:15px;">1</span><div class="a" style="left:361px;top:869px;width:61px;height:24px;background:#7b6896;border:1px dotted #dcd8b8"></div><span class="t" style="left:363.50px;top:874px;font-size:13px;line-height:15px;transform:scaleX(0.8707);transform-origin:0 0;-webkit-text-stroke:0.300px;">Expression</span><span class="t" style="left:445.50px;top:874px;font-size:13px;line-height:15px;">...</span><svg style="left:0;top:0" width="1" height="1"><path d="M335 881.500h23" stroke="#9a6ab0" stroke-width="1" stroke-dasharray="1 1"/></svg>
<!-- p_status -->
<div class="a" style="left:0px;top:1021px;width:1920px;height:19px;background:#7b6896"></div><span class="t" style="left:4.00px;top:1025px;font-size:12px;line-height:14px;letter-spacing:-0.127px;">Utilisez la touche F1 pour afficher l'Aide</span><span class="t" style="left:1321.30px;top:1025px;font-size:12px;line-height:14px;transform:scaleX(0.8810);transform-origin:0 0;-webkit-text-stroke:0.300px;">Licence accordée à : CITE-GAMBETTA62-V6 (76931310)</span><span class="t" style="left:1663.00px;top:1025px;font-size:12px;line-height:14px;letter-spacing:-0.340px;">Zoom actuel = 67%</span><span class="t" style="left:1831.30px;top:1025px;font-size:12px;line-height:14px;color:#b9afd2;transform:scaleX(0.8917);transform-origin:0 0;-webkit-text-stroke:0.300px;">MAJ</span><span class="t" style="left:1858.70px;top:1025px;font-size:12px;line-height:14px;letter-spacing:-0.864px;">NUM</span><span class="t" style="left:1890.30px;top:1025px;font-size:12px;line-height:14px;color:#b9afd2;transform:scaleX(0.8143);transform-origin:0 0;-webkit-text-stroke:0.300px;">DÉFIL</span>
</body></html>
